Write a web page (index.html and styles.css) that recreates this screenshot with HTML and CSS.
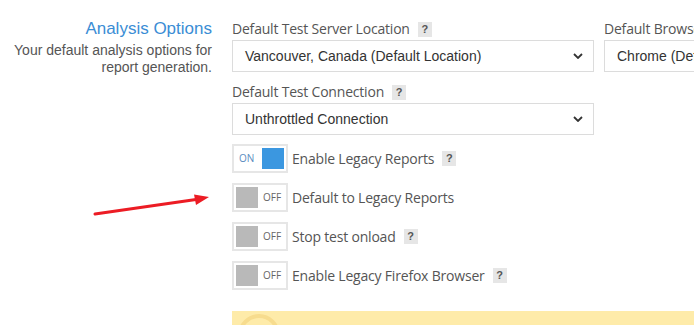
FILE: index.html
```html
<!DOCTYPE html>
<html>
<head>
<meta charset="utf-8">
<link rel="stylesheet" href="styles.css">
</head>
<body>
<div class="page">
  <div class="side">
    <h2 class="side-title">Analysis Options</h2>
    <p class="side-desc">Your default analysis options for report generation.</p>
  </div>
  <div class="main">
    <div class="fields">
      <div class="field field-location">
        <div class="label">Default Test Server Location <span class="help">?</span></div>
        <div class="select"><span>Vancouver, Canada (Default Location)</span>
          <svg class="chev" viewBox="0 0 10 6" width="10" height="6"><path d="M1 1 L5 5 L9 1" fill="none" stroke="#333" stroke-width="1.8"/></svg>
        </div>
      </div>
      <div class="field field-browser">
        <div class="label">Default Browser</div>
        <div class="select"><span>Chrome (Default)</span></div>
      </div>
    </div>
    <div class="field field-location">
      <div class="label">Default Test Connection <span class="help">?</span></div>
      <div class="select"><span>Unthrottled Connection</span>
        <svg class="chev" viewBox="0 0 10 6" width="10" height="6"><path d="M1 1 L5 5 L9 1" fill="none" stroke="#333" stroke-width="1.8"/></svg>
      </div>
    </div>
    <div class="toggles">
      <div class="toggle-row">
        <div class="toggle on"><span class="state">ON</span><span class="knob"></span></div>
        <span class="toggle-label">Enable Legacy Reports</span><span class="help">?</span>
      </div>
      <div class="toggle-row">
        <div class="toggle"><span class="knob"></span><span class="state">OFF</span></div>
        <span class="toggle-label">Default to Legacy Reports</span>
      </div>
      <div class="toggle-row">
        <div class="toggle"><span class="knob"></span><span class="state">OFF</span></div>
        <span class="toggle-label">Stop test onload</span><span class="help">?</span>
      </div>
      <div class="toggle-row">
        <div class="toggle"><span class="knob"></span><span class="state">OFF</span></div>
        <span class="toggle-label">Enable Legacy Firefox Browser</span><span class="help">?</span>
      </div>
    </div>
    <div class="notice"><span class="notice-icon"></span></div>
  </div>
</div>
<svg class="arrow" width="694" height="325" viewBox="0 0 694 325">
  <line x1="95" y1="214" x2="196" y2="199.5" stroke="#ec1c24" stroke-width="3" stroke-linecap="round"/>
  <polygon points="209,197 194,194.5 196,205" fill="#ec1c24"/>
</svg>
</body>
</html>
```
FILE: styles.css
```css
html, body {
  margin: 0;
  padding: 0;
  background: #fff;
  overflow: hidden;
  width: 694px;
  height: 325px;
}
.page {
  display: flex;
  gap: 20px;
  padding-top: 18px;
  width: 1000px;
}
.side {
  width: 212px;
  text-align: right;
  font-family: "Liberation Sans", Arial, sans-serif;
}
.side-title {
  margin: 0;
  font-weight: normal;
  font-size: 17px;
  line-height: 22px;
  color: #3a8dd5;
}
.side-desc {
  margin: 2px 0 0;
  font-size: 14px;
  line-height: 17px;
  color: #555;
}
.main {
  display: flex;
  flex-direction: column;
  width: 700px;
}
.fields {
  display: flex;
  gap: 10px;
}
.field {
  display: flex;
  flex-direction: column;
}
.field-location { width: 362px; }
.field-browser { width: 300px; }
.label {
  font-family: "Open Sans", sans-serif;
  font-size: 14px;
  line-height: 20px;
  color: #555;
  height: 22px;
  display: flex;
  align-items: center;
  gap: 8px;
  letter-spacing: -0.2px;
}
.help {
  display: inline-flex;
  align-items: center;
  justify-content: center;
  width: 14px;
  height: 15px;
  background: #e6e6e6;
  color: #555;
  font-family: "Liberation Sans", Arial, sans-serif;
  font-weight: bold;
  font-size: 11px;
  letter-spacing: 0;
}
.select {
  box-sizing: border-box;
  height: 32px;
  border: 1px solid #dcdcdc;
  display: flex;
  align-items: center;
  justify-content: space-between;
  padding: 0 10px 0 12px;
  font-family: "Liberation Sans", Arial, sans-serif;
  font-size: 14px;
  color: #333;
  margin-bottom: 9px;
  white-space: nowrap;
}
.chev { flex: none; }
.toggles {
  display: flex;
  flex-direction: column;
  gap: 11px;
  margin-top: 0;
}
.toggle-row {
  display: flex;
  align-items: center;
  height: 28px;
  font-family: "Open Sans", sans-serif;
  font-size: 14px;
  color: #555;
}
.toggle {
  box-sizing: border-box;
  width: 56px;
  height: 29px;
  border: 2px solid #e6e6e6;
  display: flex;
  align-items: center;
  padding: 0 2px;
  gap: 5px;
  margin-right: 4px;
}
.toggle .knob {
  width: 22px;
  height: 21px;
  background: #b9b9b9;
}
.toggle.on { justify-content: space-between; padding-left: 5px; }
.toggle.on .knob { background: #3b97e0; }
.state {
  font-family: "Open Sans", sans-serif;
  font-size: 10px;
  color: #666;
}
.toggle.on .state { color: #5a8cc0; }
.toggle-label {
  margin-right: 8px;
  letter-spacing: -0.2px;
}
.notice {
  margin-top: 22px;
  height: 40px;
  width: 470px;
  background: #feeba9;
  position: relative;
  overflow: hidden;
}
.notice-icon {
  position: absolute;
  left: 6px;
  top: 3px;
  width: 34px;
  height: 34px;
  border: 4px solid #f7dc8e;
  border-radius: 50%;
}
.arrow {
  position: absolute;
  left: 0;
  top: 0;
  pointer-events: none;
}
```
